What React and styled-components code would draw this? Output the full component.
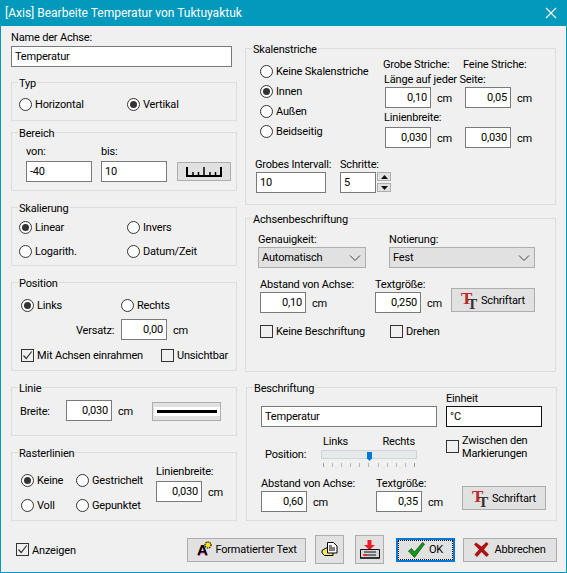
import styled, { createGlobalStyle } from "styled-components"

const GlobalStyle = createGlobalStyle`
  html, body {
    margin: 0;
    padding: 0;
    background: #f0f0f0;
  }
  body {
    font-family: Roboto, "Liberation Sans", sans-serif;
    font-size: 11px;
    letter-spacing: -0.18px;
    color: #000;
  }
`

const Window = styled.div`
  box-sizing: border-box;
  width: 567px;
  height: 573px;
  border: 1px solid #0299bd;
  border-top: 0;
  background: #f0f0f0;
  overflow: hidden;
`

const TitleBar = styled.div`
  display: flex;
  align-items: center;
  justify-content: space-between;
  height: 26px;
  padding: 0 9px 0 4px;
  background: #0299bd;
  color: #fff;
  font-size: 12px;
  letter-spacing: 0;
`

const Body = styled.div`
  display: grid;
  grid-template-columns: 226px 312px;
  column-gap: 8px;
  padding: 3px 9px 0 10px;
`

const Column = styled.div`
  display: flex;
  flex-direction: column;
`

const Group = styled.fieldset`
  box-sizing: border-box;
  flex: none;
  min-width: 0;
  width: ${p => p.$w || 226}px;
  height: ${p => p.$h}px;
  margin: ${p => p.$top}px 0 0 ${p => p.$left || 0}px;
  padding: 0;
  border: 1px solid #dcdcdc;
`

const Legend = styled.legend`
  height: 15px;
  margin-left: 6px;
  padding: 0 1px;
  line-height: 17px;
`

const Label = styled.div`
  height: 16px;
  margin-left: ${p => p.$left || 0}px;
  margin-top: ${p => p.$top || 0}px;
  line-height: 18px;
  white-space: nowrap;
`

const TextBox = styled.input`
  box-sizing: border-box;
  display: block;
  flex: none;
  width: ${p => p.$w || 46}px;
  height: 21px;
  margin: ${p => p.$top || 0}px 0 0 ${p => p.$left || 0}px;
  padding: 0 3px;
  border: 1px solid ${p => (p.$dark ? "#111" : "#7a7a7a")};
  border-radius: 0;
  outline: none;
  background: #fff;
  color: #000;
  font: inherit;
  letter-spacing: inherit;
  text-align: ${p => (p.$right ? "right" : "left")};
`

const Unit = styled.span`
  flex: none;
  width: 14px;
  height: 21px;
  margin-left: 6px;
  line-height: 23px;
`

const UnitRow = styled.div`
  display: flex;
  margin-top: ${p => p.$top || 0}px;
`

const Mark = styled.span`
  box-sizing: border-box;
  flex: none;
  display: flex;
  align-items: center;
  justify-content: center;
  width: 13px;
  height: 13px;
  margin-right: 3px;
  border: 1px solid #333;
  border-radius: ${p => (p.$round ? "50%" : "0")};
  background: ${p => (p.$round ? "#fff" : "transparent")};
`

const Dot = styled.span`
  width: 7px;
  height: 7px;
  border-radius: 50%;
  background: #333;
`

const Choice = styled.label`
  display: flex;
  align-items: center;
  height: 16px;
  line-height: 16px;
  white-space: nowrap;
`

const ChoiceText = styled.span`
  padding-top: 2px;
`

const Radio = ({ on, children }) => (
  <Choice>
    <Mark $round>{on && <Dot />}</Mark>
    <ChoiceText>{children}</ChoiceText>
  </Choice>
)

const Check = ({ on, children }) => (
  <Choice>
    <Mark>
      {on && (
        <svg width="11" height="11" viewBox="0 0 11 11">
          <path d="M1.5 5.5 4.200 8.500 9.700 1.500" fill="none" stroke="#333" strokeWidth="1.200" />
        </svg>
      )}
    </Mark>
    <ChoiceText>{children}</ChoiceText>
  </Choice>
)

const ChoiceGrid = styled.div`
  display: grid;
  grid-template-columns: ${p => p.$cols};
  row-gap: ${p => p.$gap || 0}px;
  padding: ${p => p.$pad};
`

const Button = styled.button`
  box-sizing: border-box;
  flex: none;
  display: flex;
  align-items: center;
  justify-content: center;
  gap: ${p => p.$gap ?? 3}px;
  width: ${p => p.$w}px;
  height: ${p => p.$h || 24}px;
  margin: 0;
  padding: 0;
  border: 1px solid #adadad;
  border-radius: 0;
  background: #e1e1e1;
  color: #000;
  font: inherit;
  letter-spacing: inherit;
  white-space: nowrap;
`

const FocusButton = styled(Button)`
  position: relative;
  border: 2px solid #0078d7;
  &::after {
    content: "";
    position: absolute;
    inset: 0;
    border: 1px dotted #111;
  }
`

const RangeRow = styled.div`
  display: flex;
  padding: 3px 0 0 14px;
`

const RangeField = styled.div`
  width: ${p => p.$w}px;
`

const RangeButton = styled(Button)`
  margin: 19px 0 0 1px;
`

const LineSample = styled.span`
  width: 60px;
  height: 3px;
  background: #000;
  box-shadow: 0 0 0 3px #fff;
`

const VersatzRow = styled.div`
  display: flex;
  margin: 6px 0 7px 64px;
`

const VersatzLabel = styled.span`
  width: 45px;
  height: 21px;
  line-height: 23px;
`

const LinieRow = styled.div`
  display: flex;
  align-items: flex-start;
  padding: 5px 0 0 8px;
`

const BreiteLabel = styled.span`
  width: 46px;
  height: 21px;
  line-height: 23px;
`

const LineButton = styled(Button)`
  margin: 2px 0 0 20px;
`

const RasterRow = styled.div`
  display: flex;
`

const RasterWidth = styled.div`
  margin-left: 1px;
  padding-top: 3px;
`

const TickRow = styled.div`
  display: grid;
  grid-template-columns: 139px 160px;
  grid-template-rows: 100px;
`

const TickChoices = styled.div`
  display: flex;
  flex-direction: column;
  row-gap: 4px;
  padding: 7px 0 0 14px;
`

const TickPair = styled.div`
  display: grid;
  grid-template-columns: 80px 80px;
  margin-left: ${p => p.$left || 0}px;
  margin-top: ${p => p.$top || 0}px;
`

const IntervalRow = styled.div`
  display: flex;
  align-items: flex-end;
  padding-left: 9px;
`

const IntervalField = styled.div`
  width: 85px;
`

const Spinner = styled.div`
  display: flex;
  flex-direction: column;
  justify-content: space-between;
  width: 14px;
  height: 20px;
  margin-left: 1px;
`

const SpinButton = styled.span`
  box-sizing: border-box;
  display: flex;
  align-items: center;
  justify-content: center;
  width: 14px;
  height: 9px;
  border: 1px solid #adadad;
  background: #e1e1e1;
`

const SelectRow = styled.div`
  display: flex;
  column-gap: 23px;
  padding: 5px 0 0 12px;
`

const SelectBox = styled.div`
  box-sizing: border-box;
  display: flex;
  align-items: center;
  justify-content: space-between;
  width: ${p => p.$w}px;
  height: 21px;
  padding: 0 3px;
  border: 1px solid #adadad;
  background: #e1e1e1;
`

const FieldRow = styled.div`
  display: flex;
  align-items: flex-end;
  margin: ${p => p.$top}px 0 0 ${p => p.$left}px;
`

const Field = styled.div`
  flex: none;
  width: ${p => p.$w}px;
`

const FontButton = styled(Button)`
  margin-bottom: ${p => p.$lift}px;
`

const CheckRow = styled.div`
  display: grid;
  grid-template-columns: 130px auto;
  margin: 10px 0 0 14px;
`

const CaptionRow = styled.div`
  display: flex;
  align-items: flex-end;
  column-gap: 9px;
  margin-top: -6px;
  padding: 1px 0 0 14px;
`

const PositionRow = styled.div`
  display: flex;
  height: 42px;
  padding: 6px 0 0 18px;
`

const PositionLabel = styled(Label)`
  width: 56px;
  margin-top: 13px;
`

const SliderColumn = styled.div`
  width: 96px;
`

const SliderLabels = styled.div`
  display: flex;
  justify-content: space-between;
  height: 17px;
  padding: 0 2px;
  line-height: 18px;
`

const SliderTrack = styled.div`
  position: relative;
  box-sizing: border-box;
  height: 9px;
  border: 1px solid #d0d4d4;
  background: #e7eaea;
`

const SliderThumb = styled.span`
  position: absolute;
  top: 1px;
  left: 45px;
  width: 5px;
  height: 9px;
  background: #0078d7;
  clip-path: polygon(0 0, 100% 0, 100% 70%, 50% 100%, 0 70%);
`

const SliderTicks = styled.div`
  display: flex;
  justify-content: space-between;
  margin-top: 4px;
  padding: 0 2px;
`

const SliderTick = styled.span`
  width: 1px;
  height: 4px;
  background: ${p => (p.$end ? "#9a9a9a" : "#b4b4b4")};
`

const PositionCheck = styled.div`
  display: flex;
  align-items: center;
  height: 26px;
  margin-left: 29px;
`

const TwoLine = styled.span`
  display: block;
  line-height: 13px;
  white-space: pre-line;
`

const Footer = styled.div`
  grid-column: 1 / 3;
  display: flex;
  align-items: center;
  height: 29px;
  margin-top: 14px;
  padding-left: 5px;
`

const FooterButtons = styled.div`
  display: flex;
  align-items: center;
  margin-left: auto;
`

const FooterButton = styled(Button)`
  margin-left: ${p => p.$left || 0}px;
`

const FooterFocus = styled(FocusButton)`
  margin-left: ${p => p.$left}px;
`

const IconSvg = styled.svg`
  flex: none;
  overflow: visible;
  letter-spacing: 0;
`

const CloseIcon = () => (
  <svg width="12" height="12" viewBox="0 0 12 12">
    <path d="M1 1 11 11M11 1 1 11" stroke="#fff" strokeWidth="1.100" fill="none" />
  </svg>
)

const RulerIcon = () => (
  <svg width="36" height="10" viewBox="0 0 36 10">
    <path d="M1 0v10M35 0v10M1 9h34" stroke="#000" strokeWidth="2" fill="none" />
    <path d="M7 5v4M12.500 5v4M18 0v9M24 5v4M29.500 5v4" stroke="#000" strokeWidth="1.500" fill="none" />
  </svg>
)

const Chevron = () => (
  <svg width="14" height="8" viewBox="0 0 14 8">
    <path d="M2 1.500 7 6.500 12 1.500" stroke="#444" strokeWidth="1" fill="none" />
  </svg>
)

const SpinArrow = ({ up }) => (
  <svg width="7" height="4" viewBox="0 0 7 4">
    <path d={up ? "M3.500 0 7 4H0Z" : "M0 0H7L3.500 4Z"} fill="#111" />
  </svg>
)

const FontIcon = () => (
  <IconSvg width="17" height="20" viewBox="0 0 17 20" aria-hidden="true">
    <text x="0" y="14" fontFamily="Liberation Serif" fontWeight="700" fontSize="17" fill="#c0262c">
      T<tspan dx="-5" dy="5" fontSize="15" fill="#333">T</tspan>
    </text>
  </IconSvg>
)

const FormatIcon = () => (
  <IconSvg width="17" height="17" viewBox="0 0 17 17" aria-hidden="true">
    <text x="1" y="15" fontFamily="Liberation Sans" fontWeight="700" fontSize="15" fill="#d86ab0">
      A<tspan dx="-11" dy="-1" fill="#000">A</tspan>
    </text>
    <circle cx="12" cy="4" r="3" fill="#ffe500" stroke="#000" strokeWidth="1.200" strokeDasharray="1.400 0.800" />
  </IconSvg>
)

const PrintIcon = () => (
  <svg width="17" height="15" viewBox="0 0 17 15">
    <path d="M1 8.500 5 6h5l2 2v5.500H3.500L1 11Z" fill="#f5e85c" stroke="#000" />
    <path d="M6.500.5h6l3.500 3.500v7h-9.500Z" fill="#fff" stroke="#000" />
    <path d="M8 4h3M8 6h6M8 8h6" stroke="#000" />
  </svg>
)

const SaveIcon = () => (
  <svg width="20" height="20" viewBox="0 0 20 20">
    <path d="M7.500 0h4v5H15L9.500 10 4 5h3.500Z" fill="#ee1c25" />
    <path d="M.5 9.500h19v9H.5Z" fill="#d5d5d5" stroke="#111" />
    <path d="M1 18.500h18M1 17.500h18" stroke="#333" />
    <path d="M4 12h12M4 15h12" stroke="#111" />
    <path d="M3 15h4" stroke="#ee1c25" strokeWidth="1.500" />
  </svg>
)

const OkIcon = () => (
  <svg width="17" height="16" viewBox="0 0 17 16">
    <path d="M.5 9 3.500 6.500 6.500 10 14.500.5 16.500 2 6.500 15.500Z" fill="#159a15" stroke="#0a3f0a" strokeWidth=".7" />
  </svg>
)

const CancelIcon = () => (
  <svg width="15" height="15" viewBox="0 0 15 15">
    <path d="M2 .5 7.500 4.500 12.500 0 14.500 2 10 7.500 15 12.500 12.500 15 7.500 10 3 15 .5 12.500 5 7.500 0 2.500Z" fill="#ad1313" />
  </svg>
)

const ticks = Array.from({ length: 11 }, (_, i) => i)

const App = () => (
  <>
    <GlobalStyle />
    <Window>
      <TitleBar>
        <span>[Axis] Bearbeite Temperatur von Tuktuyaktuk</span>
        <CloseIcon />
      </TitleBar>
      <Body>
        <Column>
          <Label>Name der Achse:</Label>
          <TextBox $w={221} $top={1} readOnly value="Temperatur" />

          <Group $top={8} $h={46}>
            <Legend>Typ</Legend>
            <ChoiceGrid $cols="108px 100px" $pad="6px 0 0 7px">
              <Radio>Horizontal</Radio>
              <Radio on>Vertikal</Radio>
            </ChoiceGrid>
          </Group>

          <Group $top={4} $h={66}>
            <Legend>Bereich</Legend>
            <RangeRow>
              <RangeField $w={75}>
                <Label>von:</Label>
                <TextBox $w={66} $top={2} readOnly value="-40" />
              </RangeField>
              <RangeField $w={75}>
                <Label>bis:</Label>
                <TextBox $w={66} $top={2} readOnly value="10" />
              </RangeField>
              <RangeButton $w={54} $h={19}>
                <RulerIcon />
              </RangeButton>
            </RangeRow>
          </Group>

          <Group $top={9} $h={66}>
            <Legend>Skalierung</Legend>
            <ChoiceGrid $cols="108px 100px" $gap={8} $pad="4px 0 0 7px">
              <Radio on>Linear</Radio>
              <Radio>Invers</Radio>
              <Radio>Logarith.</Radio>
              <Radio>Datum/Zeit</Radio>
            </ChoiceGrid>
          </Group>

          <Group $top={9} $h={96}>
            <Legend>Position</Legend>
            <ChoiceGrid $cols="100px 100px" $pad="7px 0 0 9px">
              <Radio on>Links</Radio>
              <Radio>Rechts</Radio>
            </ChoiceGrid>
            <VersatzRow>
              <VersatzLabel>Versatz:</VersatzLabel>
              <TextBox $right readOnly value="0,00" />
              <Unit>cm</Unit>
            </VersatzRow>
            <ChoiceGrid $cols="140px 80px" $pad="0 0 0 9px">
              <Check on>Mit Achsen einrahmen</Check>
              <Check>Unsichtbar</Check>
            </ChoiceGrid>
          </Group>

          <Group $top={9} $h={56}>
            <Legend>Linie</Legend>
            <LinieRow>
              <BreiteLabel>Breite:</BreiteLabel>
              <TextBox $right readOnly value="0,030" />
              <Unit>cm</Unit>
              <LineButton $w={69} $h={19}>
                <LineSample />
              </LineButton>
            </LinieRow>
          </Group>

          <Group $top={9} $h={76}>
            <Legend>Rasterlinien</Legend>
            <RasterRow>
              <ChoiceGrid $cols="55px 79px" $gap={9} $pad="12px 0 0 9px">
                <Radio on>Keine</Radio>
                <Radio>Gestrichelt</Radio>
                <Radio>Voll</Radio>
                <Radio>Gepunktet</Radio>
              </ChoiceGrid>
              <RasterWidth>
                <Label>Linienbreite:</Label>
                <UnitRow $top={2}>
                  <TextBox $right readOnly value="0,030" />
                  <Unit>cm</Unit>
                </UnitRow>
              </RasterWidth>
            </RasterRow>
          </Group>
        </Column>

        <Column>
          <Group $top={12} $h={164} $w={311}>
            <Legend>Skalenstriche</Legend>
            <TickRow>
              <TickChoices>
                <Radio>Keine Skalenstriche</Radio>
                <Radio on>Innen</Radio>
                <Radio>Außen</Radio>
                <Radio>Beidseitig</Radio>
              </TickChoices>
              <div>
                <TickPair $left={-2}>
                  <Label>Grobe Striche:</Label>
                  <Label>Feine Striche:</Label>
                </TickPair>
                <Label $left={-1} $top={-1}>Länge auf jeder Seite:</Label>
                <TickPair>
                  <UnitRow>
                    <TextBox $right readOnly value="0,10" />
                    <Unit>cm</Unit>
                  </UnitRow>
                  <UnitRow>
                    <TextBox $right readOnly value="0,05" />
                    <Unit>cm</Unit>
                  </UnitRow>
                </TickPair>
                <Label $left={-1} $top={1}>Linienbreite:</Label>
                <TickPair $top={2}>
                  <UnitRow>
                    <TextBox $right readOnly value="0,030" />
                    <Unit>cm</Unit>
                  </UnitRow>
                  <UnitRow>
                    <TextBox $right readOnly value="0,030" />
                    <Unit>cm</Unit>
                  </UnitRow>
                </TickPair>
              </div>
            </TickRow>
            <IntervalRow>
              <IntervalField>
                <Label>Grobes Intervall:</Label>
                <TextBox $w={70} $left={1} readOnly value="10" />
              </IntervalField>
              <div>
                <Label>Schritte:</Label>
                <UnitRow>
                  <TextBox $w={36} readOnly value="5" />
                  <Spinner>
                    <SpinButton><SpinArrow up /></SpinButton>
                    <SpinButton><SpinArrow /></SpinButton>
                  </Spinner>
                </UnitRow>
              </div>
            </IntervalRow>
          </Group>

          <Group $top={6} $h={161} $w={311}>
            <Legend>Achsenbeschriftung</Legend>
            <SelectRow>
              <div>
                <Label>Genauigkeit:</Label>
                <SelectBox $w={108}>Automatisch<Chevron /></SelectBox>
              </div>
              <div>
                <Label>Notierung:</Label>
                <SelectBox $w={146}>Fest<Chevron /></SelectBox>
              </div>
            </SelectRow>
            <FieldRow $top={8} $left={14}>
              <Field $w={115}>
                <Label>Abstand von Achse:</Label>
                <UnitRow>
                  <TextBox $right readOnly value="0,10" />
                  <Unit>cm</Unit>
                </UnitRow>
              </Field>
              <Field $w={76}>
                <Label>Textgröße:</Label>
                <UnitRow>
                  <TextBox $right readOnly value="0,250" />
                  <Unit>cm</Unit>
                </UnitRow>
              </Field>
              <FontButton $w={84} $lift={1}>
                <FontIcon />
                Schriftart
              </FontButton>
            </FieldRow>
            <CheckRow>
              <Check>Keine Beschriftung</Check>
              <Check>Drehen</Check>
            </CheckRow>
          </Group>

          <Group $top={8} $left={1} $h={141} $w={311}>
            <Legend>Beschriftung</Legend>
            <CaptionRow>
              <TextBox $w={176} readOnly value="Temperatur" />
              <div>
                <Label>Einheit</Label>
                <TextBox $w={96} $dark readOnly value="°C" />
              </div>
            </CaptionRow>
            <PositionRow>
              <PositionLabel>Position:</PositionLabel>
              <SliderColumn>
                <SliderLabels>
                  <span>Links</span>
                  <span>Rechts</span>
                </SliderLabels>
                <SliderTrack>
                  <SliderThumb />
                </SliderTrack>
                <SliderTicks>
                  {ticks.map(i => (
                    <SliderTick key={i} $end={i === 0 || i === 10} />
                  ))}
                </SliderTicks>
              </SliderColumn>
              <PositionCheck>
                <Check>
                  <TwoLine>{"Zwischen den\nMarkierungen"}</TwoLine>
                </Check>
              </PositionCheck>
            </PositionRow>
            <FieldRow $top={0} $left={14}>
              <Field $w={115}>
                <Label>Abstand von Achse:</Label>
                <UnitRow>
                  <TextBox $right readOnly value="0,60" />
                  <Unit>cm</Unit>
                </UnitRow>
              </Field>
              <Field $w={86}>
                <Label>Textgröße:</Label>
                <UnitRow>
                  <TextBox $right readOnly value="0,35" />
                  <Unit>cm</Unit>
                </UnitRow>
              </Field>
              <FontButton $w={84} $lift={2}>
                <FontIcon />
                Schriftart
              </FontButton>
            </FieldRow>
          </Group>
        </Column>

        <Footer>
          <Check on>Anzeigen</Check>
          <FooterButtons>
            <FooterButton $w={119} $gap={2}>
              <FormatIcon />
              Formatierter Text
            </FooterButton>
            <FooterButton $left={9} $w={29} $h={29}>
              <PrintIcon />
            </FooterButton>
            <FooterButton $left={11} $w={29} $h={29}>
              <SaveIcon />
            </FooterButton>
            <FooterFocus $left={12} $w={59} $gap={4}>
              <OkIcon />
              OK
            </FooterFocus>
            <FooterButton $left={8} $w={94} $gap={5}>
              <CancelIcon />
              Abbrechen
            </FooterButton>
          </FooterButtons>
        </Footer>
      </Body>
    </Window>
  </>
)

export default App
